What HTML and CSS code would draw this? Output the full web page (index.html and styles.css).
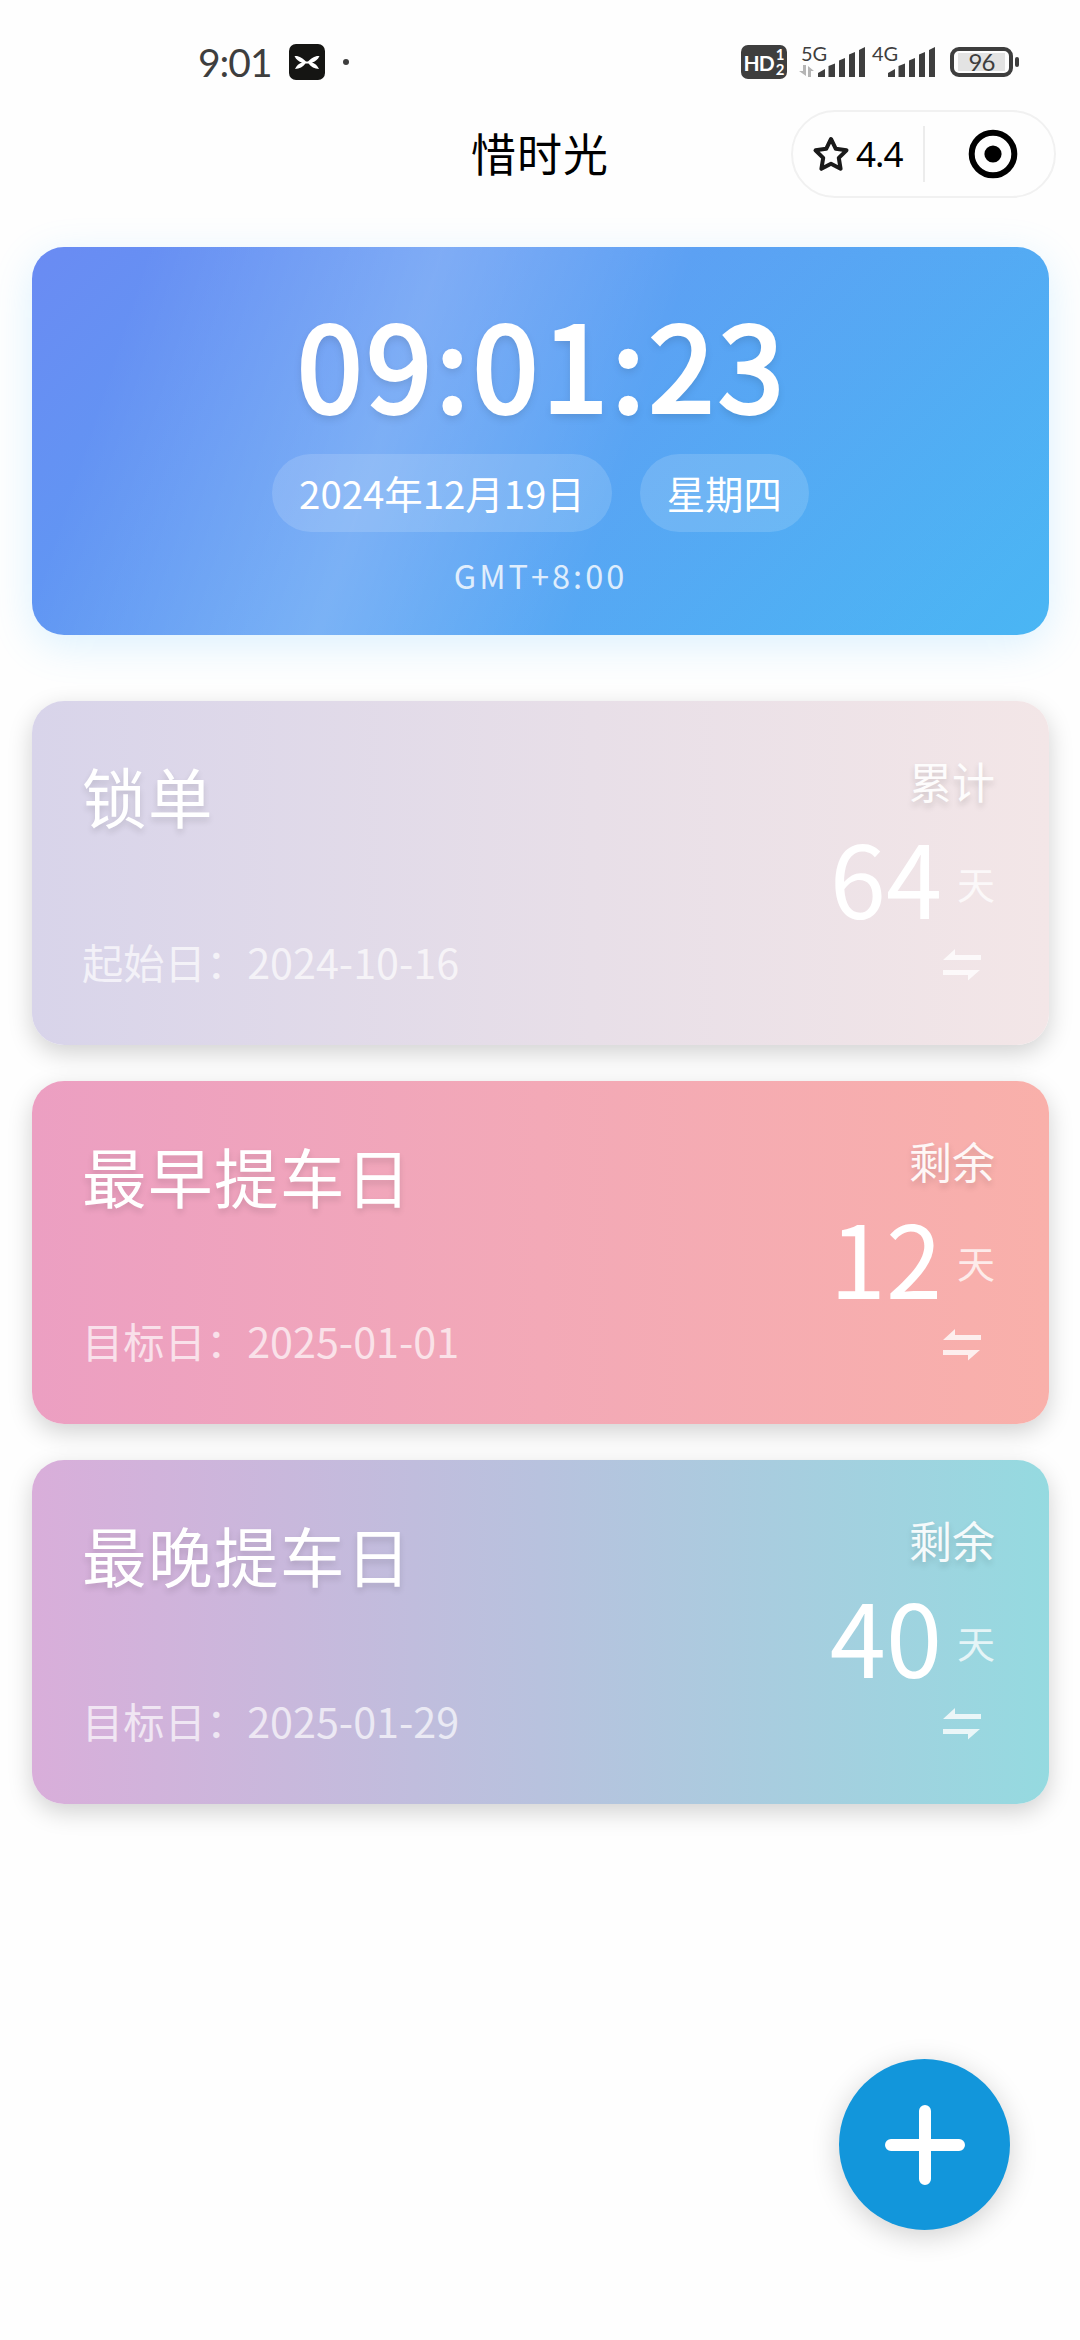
FILE: index.html
```html
<!DOCTYPE html>
<html lang="zh-CN">
<head>
    <meta charset="UTF-8">
    <meta name="viewport" content="width=device-width, initial-scale=1.0">
    <title>惜时光</title>
    <link rel="stylesheet" href="styles.css">
</head>
<body>

    <div class="page">
        <!-- Status bar -->
        <div class="status-bar">
            <div class="status-left">
                <span class="status-time">9:01</span>
                <svg class="app-icon" width="36" height="36" viewBox="0 0 36 36">
                    <rect width="36" height="36" rx="7" fill="#151513"/>
                    <path d="M5.500 12 C10 11.500 14 14.500 17 17.500 H19 C22 14.500 26 11.500 30.500 12 C29 15.500 26 17.700 23 18.500 C26 19.500 28.500 21.500 30 25 C25.500 25 22 22.500 19.500 19.500 H16.500 C14 22.500 10.500 25 6 25 C7.500 21.500 10 19.500 13 18.500 C10 17.700 7 15.500 5.500 12 Z" fill="#fff"/>
                </svg>
                <span class="status-dot"></span>
            </div>
            <div class="status-right">
                <div class="hd-badge">
                    <span class="hd-text">HD</span>
                    <span class="hd-nums"><span>1</span><span>2</span></span>
                </div>
                <div class="signal signal-5g">
                    <span class="signal-label">5G</span>
                    <svg class="data-arrows" width="15" height="12" viewBox="0 0 15 12" fill="#b5b5b5">
                        <path d="M4 0 H7 V11 L0 6 H4 Z"/>
                        <path d="M9 12 V1 L15 6 H12 V12 Z"/>
                    </svg>
                    <svg class="signal-bars" width="48" height="30" viewBox="0 0 48 30" fill="#3e3e3e">
                        <path d="M0 30 V26 L7 22 V30 Z"/>
                        <path d="M10.500 30 V19 L17 16.500 V30 Z"/>
                        <path d="M21 30 V13.500 L27 11 V30 Z"/>
                        <path d="M31 30 V7.500 L37 5 V30 Z"/>
                        <path d="M41 30 V3 L47 0 V30 Z"/>
                    </svg>
                </div>
                <div class="signal signal-4g">
                    <span class="signal-label">4G</span>
                    <svg class="signal-bars" width="48" height="30" viewBox="0 0 48 30" fill="#3e3e3e">
                        <path d="M0 30 V26 L7 22 V30 Z"/>
                        <path d="M10.500 30 V19 L17 16.500 V30 Z"/>
                        <path d="M21 30 V13.500 L27 11 V30 Z"/>
                        <path d="M31 30 V7.500 L37 5 V30 Z"/>
                        <path d="M41 30 V3 L47 0 V30 Z"/>
                    </svg>
                </div>
                <div class="battery"><span>96</span></div>
                <span class="battery-tip"></span>
            </div>
        </div>

        <!-- Title bar -->
        <header class="nav-bar">
            <h1>惜时光</h1>
            <div class="capsule">
                <div class="rating">
                    <svg width="38" height="36" viewBox="0 0 38 36">
                        <path d="M19 3 L23.800 12.800 L34.500 14.300 L26.800 21.900 L28.600 32.800 L19 27.800 L9.400 32.800 L11.200 21.900 L3.500 14.300 L14.200 12.800 Z" fill="none" stroke="#1a1a1a" stroke-width="4" stroke-linejoin="round"/>
                    </svg>
                    <span>4.4</span>
                </div>
                <div class="target">
                    <svg width="50" height="50" viewBox="0 0 50 50">
                        <circle cx="25" cy="25" r="21.300" fill="none" stroke="#000" stroke-width="6"/>
                        <circle cx="25" cy="25" r="8.600"/>
                    </svg>
                </div>
            </div>
        </header>

        <main>
            <!-- Clock -->
            <section class="clock-card">
                <div class="clock-time">09:01:23</div>
                <div class="clock-date">
                    <span class="pill">2024年12月19日</span>
                    <span class="pill">星期四</span>
                </div>
                <div class="clock-zone">GMT+8:00</div>
            </section>

            <!-- Countdown cards -->
            <section class="card-list">
                <div class="card card-lavender">
                    <div class="card-info">
                        <h2>锁单</h2>
                        <p>起始日：2024-10-16</p>
                    </div>
                    <div class="card-count">
                        <span class="count-label">累计</span>
                        <div class="count-row"><span class="count-num">64</span><span class="count-unit">天</span></div>
                        <svg class="swap" width="40" height="32" viewBox="0 0 40 32" fill="#fff">
                            <path d="M13 0 V6 H39 V11 H1 Z"/>
                            <path d="M1 21 H38 L26 31.500 V26 H1 Z"/>
                        </svg>
                    </div>
                </div>

                <div class="card card-pink">
                    <div class="card-info">
                        <h2>最早提车日</h2>
                        <p>目标日：2025-01-01</p>
                    </div>
                    <div class="card-count">
                        <span class="count-label">剩余</span>
                        <div class="count-row"><span class="count-num">12</span><span class="count-unit">天</span></div>
                        <svg class="swap" width="40" height="32" viewBox="0 0 40 32" fill="#fff">
                            <path d="M13 0 V6 H39 V11 H1 Z"/>
                            <path d="M1 21 H38 L26 31.500 V26 H1 Z"/>
                        </svg>
                    </div>
                </div>

                <div class="card card-teal">
                    <div class="card-info">
                        <h2>最晚提车日</h2>
                        <p>目标日：2025-01-29</p>
                    </div>
                    <div class="card-count">
                        <span class="count-label">剩余</span>
                        <div class="count-row"><span class="count-num">40</span><span class="count-unit">天</span></div>
                        <svg class="swap" width="40" height="32" viewBox="0 0 40 32" fill="#fff">
                            <path d="M13 0 V6 H39 V11 H1 Z"/>
                            <path d="M1 21 H38 L26 31.500 V26 H1 Z"/>
                        </svg>
                    </div>
                </div>
            </section>
        </main>

        <!-- Add button -->
        <button class="add-btn" aria-label="添加">
            <svg width="80" height="80" viewBox="0 0 80 80">
                <path d="M40 6 V74 M6 40 H74" stroke="#fff" stroke-width="12" stroke-linecap="round"/>
                <path d="M40 30 L50 40 L40 50 L30 40 Z" fill="#fff"/>
            </svg>
        </button>
    </div>

</body>
</html>
```
FILE: styles.css
```css
* {
    box-sizing: border-box;
}

body {
    margin: 0;
    background-color: #fff;
    font-family: "Noto Sans CJK SC", "Noto Sans", sans-serif;
}

h1, h2, p {
    margin: 0;
    font-weight: normal;
}

.page {
    position: relative;
    width: 1080px;
    height: 2340px;
    overflow: hidden;
    background-color: #fefefe;
}

/* Status bar */
.status-bar {
    display: flex;
    justify-content: space-between;
    align-items: center;
    height: 104px;
    padding: 20px 61px 0 198px;
    color: #3e3e3e;
}

.status-left, .status-right {
    display: flex;
    align-items: center;
}

.status-time {
    width: 91px;
    font-family: Lato, sans-serif;
    font-size: 39px;
    line-height: 40px;
    letter-spacing: -1px;
}

.status-dot {
    width: 6px;
    height: 6px;
    margin-left: 18px;
    border-radius: 50%;
    background-color: #3e3e3e;
}

.hd-badge {
    display: flex;
    align-items: center;
    justify-content: center;
    width: 46px;
    height: 34px;
    border-radius: 7px;
    background-color: #3e3e3e;
    color: #fff;
    font-family: Lato, sans-serif;
    font-weight: bold;
}

.hd-text {
    font-size: 21px;
    letter-spacing: -1px;
}

.hd-nums {
    display: flex;
    flex-direction: column;
    margin-left: 2px;
    font-size: 15px;
    line-height: 15px;
}

.signal {
    position: relative;
    display: flex;
    align-items: flex-end;
    height: 34px;
    padding-bottom: 2px;
}

.signal-5g {
    margin-left: 12px;
}

.signal-4g {
    padding-left: 17px;
    margin-left: 5px;
}

.signal-5g .signal-bars {
    margin-left: 4px;
}

/* network type sits over the short bars */
.signal-label {
    position: absolute;
    top: -2px;
    left: 2px;
    font-family: Lato, sans-serif;
    font-size: 20px;
    line-height: 20px;
}

.signal-4g .signal-label {
    left: 1px;
}

.battery {
    display: flex;
    align-items: center;
    justify-content: center;
    width: 63px;
    height: 30px;
    margin-left: 14px;
    padding: 2px 4px;
    border: 4px solid #3e3e3e;
    border-radius: 9px;
}

.battery span {
    width: 47px;
    height: 18px;
    background-color: #e3e3e3;
    font-family: Lato, sans-serif;
    font-size: 24px;
    line-height: 18px;
    letter-spacing: -1px;
    text-align: center;
}

.battery-tip {
    width: 4px;
    height: 10px;
    margin-left: 2px;
    border-radius: 2px;
    background-color: #3e3e3e;
}

/* Title bar */
.nav-bar {
    display: grid;
    grid-template-columns: 1fr auto 1fr;
    align-items: center;
    height: 100px;
    padding: 0 24px;
    color: #000;
}

.nav-bar h1 {
    grid-column: 2;
    padding-bottom: 3px;
    font-size: 45px;
    line-height: 60px;
    letter-spacing: 1px;
}

.capsule {
    display: flex;
    align-items: center;
    justify-self: end;
    width: 265px;
    height: 88px;
    border: 2px solid #f1f1f1;
    border-radius: 44px;
}

.rating {
    display: flex;
    align-items: center;
    width: 132px;
    height: 56px;
    padding-left: 19px;
    border-right: 2px solid #ececec;
}

.rating span {
    margin-left: 6px;
    font-family: "Noto Sans", sans-serif;
    font-size: 35px;
    line-height: 40px;
    letter-spacing: -1px;
}

.target {
    display: flex;
    flex: 1;
    justify-content: center;
    padding-left: 6px;
}

main {
    padding: 43px 31px 0 32px;
}

/* Clock */
.clock-card {
    display: flex;
    flex-direction: column;
    align-items: center;
    height: 388px;
    padding-top: 54px;
    border-radius: 32px;
    background: linear-gradient(108deg, rgba(255, 255, 255, 0) 10%, rgba(255, 255, 255, 0.2) 36%, rgba(255, 255, 255, 0.02) 58%, rgba(255, 255, 255, 0.02)),
                linear-gradient(135deg, #6a8bf3, #46b5f4);
    box-shadow: 0 10px 40px rgba(79, 190, 254, 0.2);
    color: #fff;
}

/* stroke gives a semibold weight at the regular width */
.clock-time {
    padding-left: 4px;
    font-size: 117px;
    line-height: 120px;
    letter-spacing: 4.5px;
    -webkit-text-stroke: 4px #fff;
    text-shadow: 0 4px 10px rgba(0, 0, 0, 0.15);
}

.clock-date {
    display: flex;
    gap: 28px;
    margin-top: 33px;
}

.pill {
    height: 78px;
    padding: 0 27px;
    border-radius: 39px;
    background-color: rgba(255, 255, 255, 0.15);
    font-size: 38.4px;
    line-height: 77px;
}

.clock-zone {
    margin-top: 21px;
    font-size: 32.5px;
    line-height: 44px;
    letter-spacing: 3px;
    opacity: 0.8;
}

/* Countdown cards */
.card-list {
    display: flex;
    flex-direction: column;
    gap: 36px;
    margin-top: 66px;
}

.card {
    display: flex;
    justify-content: space-between;
    height: 343.5px;
    padding: 50px 54px 54px 50px;
    border-radius: 32px;
    box-shadow: 0 8px 24px rgba(0, 0, 0, 0.18);
    color: #fff;
}

.card-lavender {
    background: linear-gradient(90deg, #d8d4ea, #e8dfe8 55%, #f3e6e7);
}

.card-pink {
    background: linear-gradient(90deg, #ec9fc2, #f3a9b7 50%, #f9b0aa);
}

.card-teal {
    background: linear-gradient(90deg, #d9aeda, #b8c2de 50%, #95dae0);
}

.card-info {
    display: flex;
    flex-direction: column;
    justify-content: space-between;
}

.card-info h2 {
    font-size: 64.5px;
    line-height: 89px;
    letter-spacing: 1.5px;
    text-shadow: 0 4px 6px rgba(0, 0, 0, 0.12);
}

.card-info p {
    font-size: 41.3px;
    line-height: 60px;
    opacity: 0.68;
}

.card-count {
    display: flex;
    flex-direction: column;
    align-items: flex-end;
}

.count-label {
    font-size: 43px;
    line-height: 59px;
    opacity: 0.9;
    text-shadow: 0 4px 6px rgba(0, 0, 0, 0.15);
}

.count-row {
    display: flex;
    align-items: center;
    margin-top: 4px;
}

.count-num {
    padding-top: 3px;
    font-size: 101px;
    line-height: 117px;
}

.count-unit {
    margin-left: 15px;
    padding-top: 17px;
    font-size: 38px;
    line-height: 50px;
    opacity: 0.75;
}

.swap {
    margin: 15px 13px 0 0;
    opacity: 0.8;
}

/* Floating add button */
.add-btn {
    position: absolute;
    right: 70px;
    bottom: 110px;
    display: flex;
    align-items: center;
    justify-content: center;
    width: 171px;
    height: 171px;
    padding: 0;
    border: none;
    border-radius: 50%;
    background-color: #1296db;
    box-shadow: 0 6px 28px rgba(0, 0, 0, 0.18);
}
```
